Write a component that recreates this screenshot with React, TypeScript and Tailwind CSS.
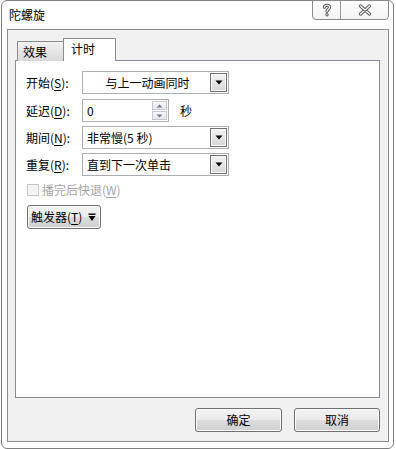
import React from "react";

const F = "font-['Noto_Sans_CJK_SC','Microsoft_YaHei',sans-serif]";

function DropBtn() {
  return (
    <div className="w-[17px] h-[19px] border border-[#707070] bg-[linear-gradient(#f4f4f4,#d6d6d6)] flex items-center justify-center mr-[1px] shadow-[inset_0_0_0_1px_#fafafa]">
      <svg width="8" height="5" viewBox="0 0 8 5">
        <polygon points="0.5,0.5 7.5,0.5 4,4.5" fill="#000" />
      </svg>
    </div>
  );
}

function Combo({ text, center }: { text: string; center?: boolean }) {
  return (
    <div className="w-[147px] h-[23px] border border-[#abadb3] bg-white flex items-center">
      <div className={center ? "flex-1 text-center text-[12px] leading-none pl-[2px]" : "flex-1 pl-[4px] text-[12px] leading-none"}>
        {text}
      </div>
      <DropBtn />
    </div>
  );
}

function Label({ a, k }: { a: string; k: string }) {
  return (
    <div className="w-[56px] text-[12px] leading-none text-black">
      {a}(<span className="underline underline-offset-[2px]">{k}</span>):
    </div>
  );
}

function HollowGlyph({ d, w, h }: { d: string; w: number; h: number }) {
  return (
    <svg width={w} height={h} viewBox={`0 0 ${w} ${h}`}>
      <path d={d} fill="none" stroke="#5a5a5a" strokeWidth="3.2" strokeLinecap="round" strokeLinejoin="round" />
      <path d={d} fill="none" stroke="#ffffff" strokeWidth="1.2" strokeLinecap="round" strokeLinejoin="round" />
    </svg>
  );
}

export default function App() {
  return (
    <div className={`w-[396px] h-[449px] bg-white ${F}`}>
      <div className="ml-[1px] w-[393px] h-[449px] border border-[#7d7d7d] rounded-[6px] bg-white flex flex-col">
        {/* title bar */}
        <div className="h-[28px] flex items-start justify-between">
          <div className="pl-[7px] pt-[8px] text-[12px] leading-none text-black">陀螺旋</div>
          <div className="-mt-[1px] mr-[4px] flex h-[20px] border border-[#8a8a8a] rounded-b-[4px] bg-[linear-gradient(#ffffff,#f3f3f3)]">
            <div className="w-[28px] flex items-center justify-center border-r border-[#9a9a9a]">
              <HollowGlyph w={10} h={14} d="M2.5 4.2 C2.5 1.6 7.5 1.6 7.5 4.2 C7.5 6.2 5 6.2 5 8.3 M5 11.6 L5 11.8" />
            </div>
            <div className="w-[47px] flex items-center justify-center">
              <HollowGlyph w={14} h={12} d="M2.5 2 L11.5 10 M11.5 2 L2.5 10" />
            </div>
          </div>
        </div>

        {/* inner panel */}
        <div className="ml-[5px] mr-[4px] h-[413px] border border-[#8c8c8c] bg-[#f0f0f0] flex flex-col pt-[8px] pl-[7px]">
          {/* tabs */}
          <div className="relative z-10 flex items-end h-[23px] ml-[2px]">
            <div className="w-[46px] h-[20px] border-l border-t border-[#8c8c8c] bg-[linear-gradient(#f2f2f2,#d9d9d9)] text-[12px] leading-none flex items-center pl-[5px] text-black">
              效果
            </div>
            <div className="w-[53px] h-[23px] border-l border-t border-r border-[#8c8c8c] bg-white text-[12px] leading-none flex items-center pl-[7px] pb-[2px] text-black">
              计时
            </div>
          </div>
          {/* content panel */}
          <div className="-mt-[1px] w-[365px] h-[338px] border border-[#898c95] bg-white flex flex-col pt-[10px] pl-[10px]">
            <div className="flex items-center h-[23px]">
              <Label a="开始" k="S" />
              <Combo text="与上一动画同时" center />
            </div>
            <div className="flex items-center h-[23px] mt-[5px]">
              <Label a="延迟" k="D" />
              <div className="w-[87px] h-[23px] border border-[#abadb3] bg-white flex items-center">
                <div className="flex-1 pl-[4px] text-[12px] leading-none">0</div>
                <div className="flex flex-col gap-[1px] mr-[1px]">
                  <div className="w-[15px] h-[9px] border border-[#c3c8d2] bg-[linear-gradient(#f6f7f9,#e3e6ec)] flex items-center justify-center">
                    <svg width="7" height="4" viewBox="0 0 7 4"><polygon points="0.5,3.5 6.5,3.5 3.5,0.5" fill="#6a7a99" /></svg>
                  </div>
                  <div className="w-[15px] h-[9px] border border-[#c3c8d2] bg-[linear-gradient(#f6f7f9,#e3e6ec)] flex items-center justify-center">
                    <svg width="7" height="4" viewBox="0 0 7 4"><polygon points="0.5,0.5 6.5,0.5 3.5,3.5" fill="#6a7a99" /></svg>
                  </div>
                </div>
              </div>
              <div className="ml-[11px] text-[12px] leading-none text-black">秒</div>
            </div>
            <div className="flex items-center h-[23px] mt-[4px]">
              <Label a="期间" k="N" />
              <Combo text="非常慢(5 秒)" />
            </div>
            <div className="flex items-center h-[23px] mt-[4px]">
              <Label a="重复" k="R" />
              <Combo text="直到下一次单击" />
            </div>
            <div className="flex items-center mt-[8px] ml-[1px] h-[12px]">
              <div className="w-[12px] h-[12px] border border-[#c5c5c5] bg-[#f4f4f4]" />
              <div className="ml-[3px] text-[12px] leading-none text-[#a3a3a3]">
                播完后快退(<span className="underline underline-offset-[2px]">W</span>)
              </div>
            </div>
            <div className="mt-[9px] ml-[1px] w-[74px] h-[24px] border border-[#707070] rounded-[3px] bg-[linear-gradient(#f2f2f2_0%,#ebebeb_50%,#dddddd_50%,#cfcfcf_100%)] flex items-center pl-[3px] shadow-[inset_0_0_0_1px_#fbfbfb]">
              <span className="text-[12px] leading-none text-black">
                触发器(<span className="underline underline-offset-[2px]">T</span>)
              </span>
              <svg className="ml-[6px]" width="8" height="9" viewBox="0 0 8 9">
                <rect x="0.5" y="0.5" width="7" height="1.4" fill="#000" />
                <polygon points="0.5,3 7.5,3 4,8" fill="#000" />
              </svg>
            </div>
          </div>
          {/* buttons */}
          <div className="flex justify-end gap-[12px] mt-[10px] w-[365px]">
            <div className="w-[87px] h-[24px] border border-[#707070] rounded-[3px] bg-[linear-gradient(#f2f2f2_0%,#ebebeb_50%,#dddddd_50%,#cfcfcf_100%)] shadow-[inset_0_0_0_1px_#fbfbfb] flex items-center justify-center text-[12px] leading-none text-black">
              确定
            </div>
            <div className="w-[86px] h-[24px] border border-[#707070] rounded-[3px] bg-[linear-gradient(#f2f2f2_0%,#ebebeb_50%,#dddddd_50%,#cfcfcf_100%)] shadow-[inset_0_0_0_1px_#fbfbfb] flex items-center justify-center text-[12px] leading-none text-black">
              取消
            </div>
          </div>
        </div>
      </div>
    </div>
  );
}
